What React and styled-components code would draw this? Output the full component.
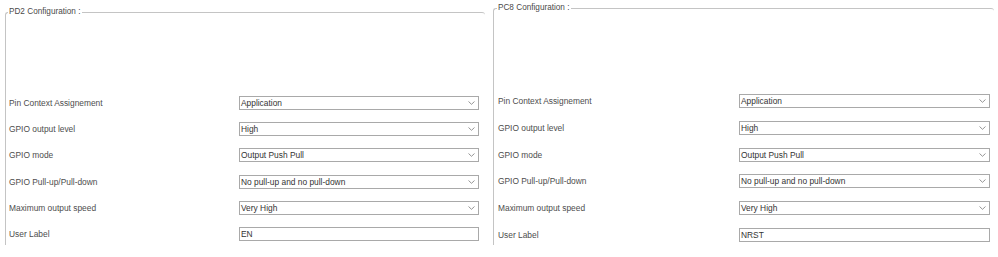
import React from "react";
import styled, { createGlobalStyle } from "styled-components";

const GlobalStyle = createGlobalStyle`
  html, body {
    margin: 0;
    padding: 0;
    background: #ffffff;
  }
  body {
    font-family: "Liberation Sans", Arial, sans-serif;
  }
`;

const Page = styled.div`
  display: flex;
  align-items: flex-start;
  padding-left: 5px;
  width: 998px;
  height: 257px;
  box-sizing: border-box;
  overflow: hidden;
`;

const Panel = styled.fieldset`
  margin: ${(p) => p.$top}px 0 0 0;
  width: ${(p) => p.$width}px;
  height: ${(p) => 245 - p.$top}px;
  box-sizing: border-box;
  padding: ${(p) => p.$padTop}px ${(p) => p.$padRight}px 0 ${(p) => p.$padLeft}px;
  border: 1px solid #c4c4c4;
  border-bottom: none;
  border-right: ${(p) => (p.$closed ? "1px solid #c4c4c4" : "none")};
  border-radius: 3px 3px 0 0;
  min-width: 0;
`;

const Legend = styled.legend`
  font-size: 8.2px;
  color: #4a4a4a;
  padding: 0 2px 0 1px;
  margin-left: -1px;
  line-height: 10px;
`;

const Rows = styled.div`
  display: grid;
  grid-template-columns: ${(p) => p.$labelWidth}px 1fr;
  grid-auto-rows: 14px;
  row-gap: ${(p) => p.$gap}px;
  align-items: center;
`;

const Label = styled.div`
  font-size: 8.4px;
  color: #4d4d4d;
  white-space: nowrap;
`;

const Field = styled.div`
  height: 14px;
  box-sizing: border-box;
  border: 1px solid #a9a9a9;
  display: flex;
  align-items: center;
  justify-content: space-between;
  padding: 0 3px 0 1px;
  font-size: 8.4px;
  color: #333333;
  background: #ffffff;
  white-space: nowrap;
`;

const Chevron = () => (
  <svg width="7" height="4" viewBox="0 0 7 4">
    <path d="M0.5 0.5 L3.5 3.3 L6.5 0.5" fill="none" stroke="#8a8a8a" strokeWidth="0.9" />
  </svg>
);

const Select = ({ value }) => (
  <Field>
    <span>{value}</span>
    <Chevron />
  </Field>
);

const Input = ({ value }) => (
  <Field>
    <span>{value}</span>
  </Field>
);

const rows = [
  { label: "Pin Context Assignement", value: "Application" },
  { label: "GPIO output level", value: "High" },
  { label: "GPIO mode", value: "Output Push Pull" },
  { label: "GPIO Pull-up/Pull-down", value: "No pull-up and no pull-down" },
  { label: "Maximum output speed", value: "Very High" },
];

const PinConfig = ({ pin, userLabel, ...layout }) => (
  <Panel
    $top={layout.top}
    $width={layout.width}
    $padTop={layout.padTop}
    $padLeft={layout.padLeft}
    $padRight={layout.padRight}
    $closed={layout.closed}
  >
    <Legend>{pin} Configuration :</Legend>
    <Rows $labelWidth={layout.labelWidth} $gap={layout.gap}>
      {rows.map((r) => (
        <React.Fragment key={r.label}>
          <Label>{r.label}</Label>
          <Select value={r.value} />
        </React.Fragment>
      ))}
      <Label>User Label</Label>
      <Input value={userLabel} />
    </Rows>
  </Panel>
);

const Spacer = styled.div`
  width: 8px;
  flex: none;
`;

export default function App() {
  return (
    <>
      <GlobalStyle />
      <Page>
        <PinConfig
          pin="PD2"
          userLabel="EN"
          top={7}
          width={480}
          padTop={79}
          padLeft={3}
          padRight={6}
          labelWidth={230}
          gap={12.2}
        />
        <Spacer />
        <PinConfig
          pin="PC8"
          userLabel="NRST"
          top={3}
          width={501}
          padTop={81}
          padLeft={4}
          padRight={4}
          labelWidth={241}
          gap={12.8}
        />
      </Page>
    </>
  );
}
